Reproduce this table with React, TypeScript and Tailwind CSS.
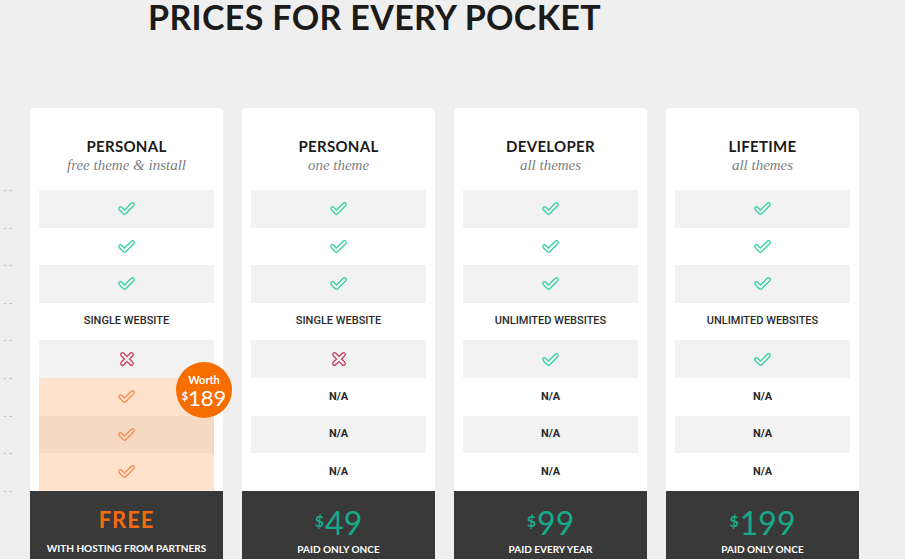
import { useId } from "react";

type Cell = "check" | "cross" | string;

type Plan = {
  title: string;
  subtitle: string;
  rows: Cell[];
  price: string;
  note: string;
  free?: boolean;
};

const PLANS: Plan[] = [
  {
    title: "PERSONAL",
    subtitle: "free theme & install",
    rows: ["check", "check", "check", "SINGLE WEBSITE", "cross", "check", "check", "check"],
    price: "FREE",
    note: "WITH HOSTING FROM PARTNERS",
    free: true,
  },
  {
    title: "PERSONAL",
    subtitle: "one theme",
    rows: ["check", "check", "check", "SINGLE WEBSITE", "cross", "N/A", "N/A", "N/A"],
    price: "49",
    note: "PAID ONLY ONCE",
  },
  {
    title: "DEVELOPER",
    subtitle: "all themes",
    rows: ["check", "check", "check", "UNLIMITED WEBSITES", "check", "N/A", "N/A", "N/A"],
    price: "99",
    note: "PAID EVERY YEAR",
  },
  {
    title: "LIFETIME",
    subtitle: "all themes",
    rows: ["check", "check", "check", "UNLIMITED WEBSITES", "check", "N/A", "N/A", "N/A"],
    price: "199",
    note: "PAID ONLY ONCE",
  },
];

function CheckIcon({ color }: { color: string }) {
  const id = useId();
  return (
    <svg width="19" height="15" viewBox="0 0 19 15">
      <mask id={id}>
        <path d="M3.5 7.5 L7.5 11.5 L15.5 3.5" fill="none" stroke="white" strokeWidth="4.6" strokeLinecap="round" strokeLinejoin="round" />
        <path d="M3.5 7.5 L7.5 11.5 L15.5 3.5" fill="none" stroke="black" strokeWidth="2.2" strokeLinecap="round" strokeLinejoin="round" />
      </mask>
      <rect width="19" height="15" fill={color} mask={`url(#${id})`} />
    </svg>
  );
}

function CrossIcon() {
  const id = useId();
  return (
    <svg width="16" height="16" viewBox="0 0 16 16">
      <mask id={id}>
        <path d="M3.5 3.5 L12.5 12.5 M12.5 3.5 L3.5 12.5" fill="none" stroke="white" strokeWidth="4.8" strokeLinecap="round" />
        <path d="M3.5 3.5 L12.5 12.5 M12.5 3.5 L3.5 12.5" fill="none" stroke="black" strokeWidth="2.4" strokeLinecap="round" />
      </mask>
      <rect width="16" height="16" fill="#c93a5c" mask={`url(#${id})`} />
    </svg>
  );
}

function rowBg(plan: Plan, idx: number) {
  if (plan.free && idx >= 5) {
    return idx === 6 ? "bg-[#f5d9c3]" : "bg-[#ffe2cc]";
  }
  return idx % 2 === 0 ? "bg-[#f2f2f2]" : "bg-white";
}

function PlanCard({ plan }: { plan: Plan }) {
  return (
    <div className="relative flex w-[193px] shrink-0 flex-col rounded-t-[4px] bg-white">
      <div className="h-[82px] pt-[28px] text-center">
        <p className="font-['Lato',sans-serif] text-[15px] leading-[20px] font-bold tracking-[0.02em] text-[#1b1b1b]">
          {plan.title}
        </p>
        <p className="font-['Liberation_Serif',serif] text-[15px] leading-[18px] italic text-[#808080]">
          {plan.subtitle}
        </p>
      </div>
      <div className="px-[9px]">
        {plan.rows.map((cell, idx) => (
          <div
            key={idx}
            className={`flex h-[37.6px] items-center justify-center ${rowBg(plan, idx)}`}
          >
            {cell === "check" ? (
              <CheckIcon color={plan.free && idx >= 5 ? "#f5894b" : "#2fcfa3"} />
            ) : cell === "cross" ? (
              <CrossIcon />
            ) : cell === "N/A" ? (
              <span className="font-['Roboto',sans-serif] text-[11px] font-bold text-[#2a2a2a]">N/A</span>
            ) : (
              <span className="font-['Roboto',sans-serif] text-[11px] font-medium text-[#2a2a2a]">{cell}</span>
            )}
          </div>
        ))}
      </div>
      <div className="h-[90px] bg-[#393939] pt-4 text-center font-['Lato',sans-serif]">
        {plan.free ? (
          <>
            <p className="text-[22px] leading-[25px] font-bold tracking-[0.04em] text-[#f26b10]">FREE</p>
            <p className="mt-[10px] text-[10px] leading-[12px] font-bold text-white">{plan.note}</p>
          </>
        ) : (
          <>
            <div className="flex h-[32px] items-start justify-center text-[#17a98a]">
              <span className="mt-[6px] mr-[1px] text-[16px] leading-[16px] font-bold">$</span>
              <span className="text-[32px] leading-[32px]">{plan.price}</span>
            </div>
            <p className="mt-[4px] text-[10px] leading-[12px] font-bold text-white">{plan.note}</p>
          </>
        )}
      </div>
      {plan.free && (
        <div className="absolute top-[254px] left-[146px] flex h-[56px] w-[56px] flex-col items-center justify-center rounded-full bg-[#f66d00] font-['Lato',sans-serif] text-white">
          <span className="text-[11px] leading-[12px] font-bold">Worth</span>
          <div className="mt-[3px] flex items-start">
            <span className="mt-[1px] text-[11px] leading-[11px] font-bold">$</span>
            <span className="text-[22px] leading-[18px]">189</span>
          </div>
        </div>
      )}
    </div>
  );
}

export default function App() {
  return (
    <div className="h-[559px] w-[905px] overflow-hidden bg-[#efefef]">
      <h1 className="pl-[148px] font-['Lato',sans-serif] text-[34px] leading-[34px] font-bold tracking-[0.01em] text-[#1b1b1b]">
        PRICES FOR EVERY POCKET
      </h1>
      <div className="mt-[74px] flex">
        <div className="w-[30px] shrink-0 pt-[76px] pl-[3px]">
          {Array.from({ length: 9 }).map((_, i) => (
            <div key={i} className="h-[37.6px] font-['DejaVu_Sans',sans-serif] text-[9px] leading-[12px] text-[#b5b5b5]">
              - -
            </div>
          ))}
        </div>
        <div className="flex gap-[19px]">
          {PLANS.map((plan, i) => (
            <PlanCard key={i} plan={plan} />
          ))}
        </div>
      </div>
    </div>
  );
}
